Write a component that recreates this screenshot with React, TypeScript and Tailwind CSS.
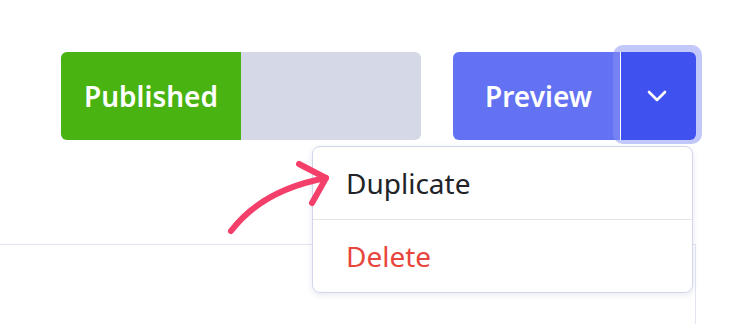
import React from "react";

export default function App() {
  return (
    <div className="relative w-[736px] h-[324px] bg-white overflow-hidden font-['Noto_Sans',sans-serif]">
      <div className="flex pt-[52px] pl-[61px] gap-[32px]">
        <div className="flex w-[360px] h-[88px] rounded-[6px] overflow-hidden bg-[#d5d9e7]">
          <div className="w-[180px] bg-[#49b411] flex items-center justify-center text-white font-semibold text-[28px] leading-none">
            Published
          </div>
        </div>
        <div className="relative flex h-[88px]">
          <button className="w-[167px] h-full bg-[#6372f2] rounded-l-[6px] text-white font-semibold text-[28px] leading-none flex items-center justify-center pl-[4px]">
            Preview
          </button>
          <div className="absolute left-[160px] top-[-7px] bottom-[-4px] right-[-6px] rounded-[10px] bg-[rgba(134,146,245,0.5)]" />
          <button className="relative w-[76px] h-full bg-[#3f51ee] border-l border-white rounded-r-[6px] flex items-center justify-center pr-[4px]">
            <svg width="20" height="12" viewBox="0 0 20 12" fill="none">
              <path d="M2 2l8 8 8-8" stroke="white" strokeWidth="2.6" strokeLinecap="round" strokeLinejoin="round" />
            </svg>
          </button>
          <div className="absolute left-[-141px] top-[94px] w-[381px] h-[147px] bg-white border border-[#d3d6ea] rounded-[8px] shadow-[0_2px_6px_rgba(60,70,150,0.12)] flex flex-col z-10">
            <div className="h-[72px] flex items-center pl-[33px] text-[28px] leading-none text-[#212327]">Duplicate</div>
            <div className="h-px bg-[#e5e5e8]" />
            <div className="flex-1 flex items-center pl-[33px] text-[28px] leading-none text-[#e8453c]">Delete</div>
          </div>
        </div>
      </div>
      <div className="mt-[104px] w-[696px] h-[80px] border-t border-r border-[#e3e5f3]" />
      <svg className="absolute left-0 top-0 z-20 pointer-events-none" width="736" height="324" viewBox="0 0 736 324" fill="none">
        <path d="M231 231 Q 262 190 326 178" stroke="#f43f6b" strokeWidth="6" strokeLinecap="round" fill="none" />
        <path d="M299 164 L326 178 L312 203" stroke="#f43f6b" strokeWidth="6" strokeLinecap="round" strokeLinejoin="round" fill="none" />
      </svg>
    </div>
  );
}
